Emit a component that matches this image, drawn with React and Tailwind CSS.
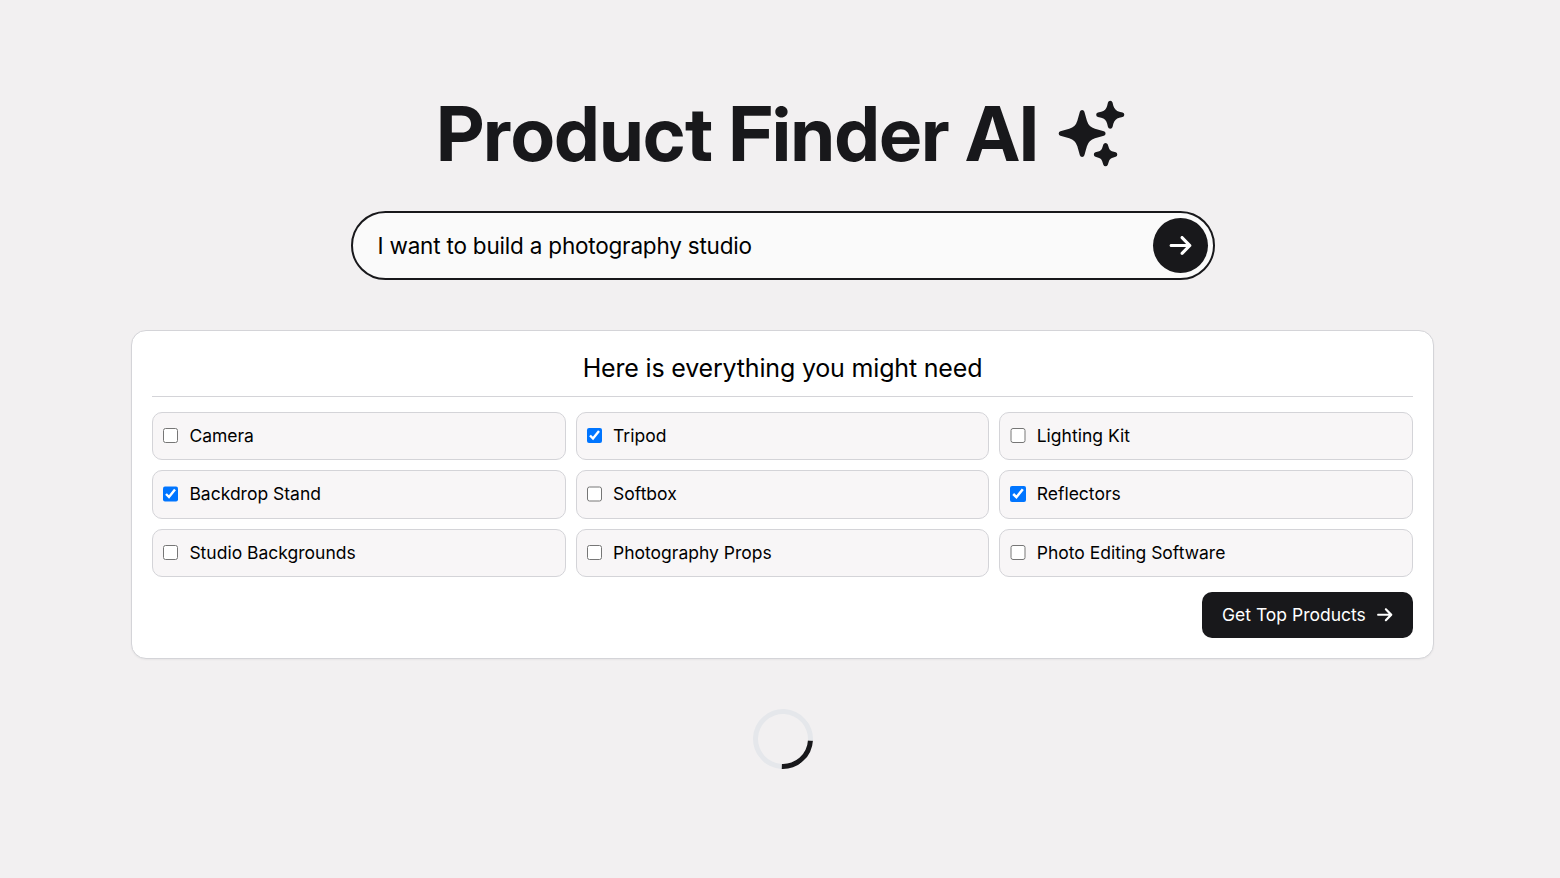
import React from "react";
import { HiSparkles } from "react-icons/hi2";
import { FaArrowRight } from "react-icons/fa6";

const items = [
  { label: "Camera", checked: false },
  { label: "Tripod", checked: true },
  { label: "Lighting Kit", checked: false },
  { label: "Backdrop Stand", checked: true },
  { label: "Softbox", checked: false },
  { label: "Reflectors", checked: true },
  { label: "Studio Backgrounds", checked: false },
  { label: "Photography Props", checked: false },
  { label: "Photo Editing Software", checked: false },
];

function SearchBar() {
  return (
    <form className="mt-[38px] flex h-[69px] w-[864px] items-center rounded-full border-2 border-[#18181b] bg-[#fafafa] pl-[25px] pr-[5px]">
      <input
        className="min-w-0 flex-1 bg-transparent text-[22.5px] tracking-[-0.2px] text-black outline-none"
        defaultValue="I want to build a photography studio"
      />
      <button
        type="button"
        className="flex size-[55px] items-center justify-center rounded-full bg-[#18181b] text-[25px] text-white"
      >
        <FaArrowRight />
      </button>
    </form>
  );
}

function Option({ label, checked }) {
  return (
    <label className="flex items-center rounded-[10px] border border-[#d4d4d8] bg-[#f8f6f7] pl-[10px]">
      <input type="checkbox" defaultChecked={checked} className="mb-px size-[15.4px]" />
      <span className="ml-[11px] text-[17.5px] text-black">{label}</span>
    </label>
  );
}

export default function App() {
  return (
    <main className="flex min-h-screen flex-col items-center bg-[#f2f0f1] pl-[5px] pt-[93px] font-['Inter',sans-serif]">
      <h1 className="flex h-[80px] items-center gap-[15px] font-['Inter_Display','Inter',sans-serif] text-[75px] font-bold leading-none text-[#18181b] [font-variation-settings:'opsz'_32]">
        Product Finder AI
        <HiSparkles />
      </h1>

      <SearchBar />

      <section className="mt-[50px] flex h-[329px] w-[1303px] flex-col rounded-[15px] border border-[#d4d4d8] bg-white p-[20px] shadow-xs">
        <h2 className="h-[46px] border-b border-[#d4d4d8] text-center text-[25px] leading-[35px] tracking-[-0.18px] text-black">
          Here is everything you might need
        </h2>
        <div className="mt-[15px] grid h-[165px] grid-cols-3 grid-rows-3 gap-[10px]">
          {items.map((item) => (
            <Option key={item.label} {...item} />
          ))}
        </div>
        <button
          type="button"
          className="mt-[15px] flex h-[46px] w-[211px] items-center justify-between self-end rounded-[10px] bg-[#18181b] px-[20px] text-[17.5px] text-white"
        >
          Get Top Products
          <FaArrowRight />
        </button>
      </section>

      <div className="mt-[50px] size-[60px] rotate-[-42deg] rounded-full border-[5px] border-[#e5e7eb] border-b-[#18181b]" />
    </main>
  );
}
